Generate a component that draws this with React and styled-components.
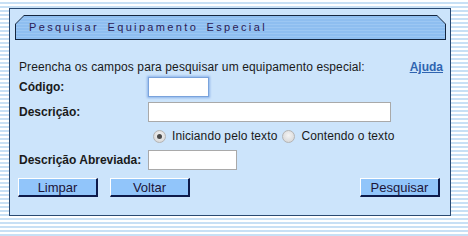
import React from "react";
import styled, { createGlobalStyle } from "styled-components";

const Global = createGlobalStyle`
  html, body {
    margin: 0;
    padding: 0;
  }
  body {
    width: 468px;
    height: 236px;
    overflow: hidden;
    font-family: "Liberation Sans", Arial, sans-serif;
    background: repeating-linear-gradient(
      to bottom,
      #ffffff 0px,
      #ffffff 2px,
      #c8e0f5 2px,
      #c8e0f5 4px
    );
  }
`;

const Panel = styled.div`
  box-sizing: border-box;
  margin: 8px 0 0 9px;
  width: 442px;
  height: 208px;
  border: 1px solid #2a4a72;
  background-color: #cce4fb;
  padding: 6px 4px 0 5px;
`;

const TitleOuter = styled.div`
  height: 25px;
  background-color: #15263f;
  clip-path: polygon(9px 0, calc(100% - 9px) 0, 100% 9px, 100% 100%, 0 100%, 0 9px);
  padding: 1px;
  box-sizing: border-box;
`;

const TitleInner = styled.div`
  height: 100%;
  box-sizing: border-box;
  clip-path: polygon(8px 0, calc(100% - 8px) 0, 100% 8px, 100% 100%, 0 100%, 0 8px);
  background: repeating-linear-gradient(
    to bottom,
    #8ebef0 0px,
    #8ebef0 2px,
    #9cc7f3 2px,
    #9cc7f3 3px
  );
  padding-left: 13px;
  font-size: 11px;
  letter-spacing: 2.35px;
  word-spacing: 3px;
  line-height: 23px;
  color: #2b1b55;
`;

const Intro = styled.div`
  display: flex;
  justify-content: space-between;
  align-items: center;
  margin: 20px 3px 3px 4px;
  font-size: 12px;
  line-height: 14px;
  color: #1a1a1a;
`;

const IntroText = styled.span`
  letter-spacing: 0.12px;
`;

const Help = styled.a`
  color: #2f64b0;
  font-weight: bold;
  text-decoration: underline;
`;

const Form = styled.div`
  display: grid;
  grid-template-columns: 129px 1fr;
  margin-left: 4px;
  font-size: 12px;
  color: #1a1a1a;
`;

const Label = styled.div`
  font-weight: bold;
  display: flex;
  align-items: center;
  height: ${(p) => p.$h}px;
  margin-top: ${(p) => p.$mt || 0}px;
`;

const Field = styled.input`
  box-sizing: border-box;
  width: ${(p) => p.$w}px;
  height: 20px;
  margin-top: ${(p) => p.$mt || 0}px;
  border: 1px solid ${(p) => (p.$focus ? "#7aa3dc" : "#a9a9a9")};
  box-shadow: ${(p) => (p.$focus ? "0 0 2px 1px #8fb4ea" : "none")};
  background: #fff;
  outline: none;
  padding: 0 3px;
  font-family: inherit;
  font-size: 12px;
`;

const Options = styled.div`
  display: flex;
  align-items: center;
  height: 28px;
  padding-left: 5px;
`;

const Radio = styled.input`
  appearance: none;
  margin: 0 6px 0 0;
  width: 13px;
  height: 13px;
  border-radius: 50%;
  border: 1px solid #b4b4b4;
  background: radial-gradient(circle at 50% 40%, #f4f4f4, #d2d2d2);
  box-sizing: border-box;
  position: relative;
  &:checked::after {
    content: "";
    position: absolute;
    left: 3px;
    top: 3px;
    width: 5px;
    height: 5px;
    border-radius: 50%;
    background: #4a4a4a;
  }
`;

const OptionText = styled.span`
  margin-right: 5px;
  letter-spacing: 0.1px;
`;

const Buttons = styled.div`
  display: flex;
  margin: 8px 6px 0 3px;
  gap: 12px;
`;

const Button = styled.button`
  box-sizing: border-box;
  width: 80px;
  height: 19px;
  margin-left: ${(p) => (p.$right ? "auto" : "0")};
  padding: 0;
  background-color: #91c5fa;
  border-style: solid;
  border-width: 1px 2px 2px 1px;
  border-color: #ffffff #0d1a4a #0d1a4a #ffffff;
  font-family: "Liberation Sans", Arial, sans-serif;
  font-size: 13px;
  color: #1c1438;
  line-height: 15px;
`;

export default function App() {
  return (
    <>
      <Global />
      <Panel>
        <TitleOuter>
          <TitleInner>Pesquisar Equipamento Especial</TitleInner>
        </TitleOuter>
        <Intro>
          <IntroText>Preencha os campos para pesquisar um equipamento especial:</IntroText>
          <Help>Ajuda</Help>
        </Intro>
        <Form>
          <Label $h={20}>Código:</Label>
          <Field $w={61} $focus />
          <Label $h={20} $mt={5}>Descrição:</Label>
          <Field $w={243} $mt={5} />
          <div />
          <Options>
            <Radio type="radio" name="modo" defaultChecked />
            <OptionText>Iniciando pelo texto</OptionText>
            <Radio type="radio" name="modo" />
            <OptionText>Contendo o texto</OptionText>
          </Options>
          <Label $h={20}>Descrição Abreviada:</Label>
          <Field $w={89} />
        </Form>
        <Buttons>
          <Button>Limpar</Button>
          <Button>Voltar</Button>
          <Button $right>Pesquisar</Button>
        </Buttons>
      </Panel>
    </>
  );
}
